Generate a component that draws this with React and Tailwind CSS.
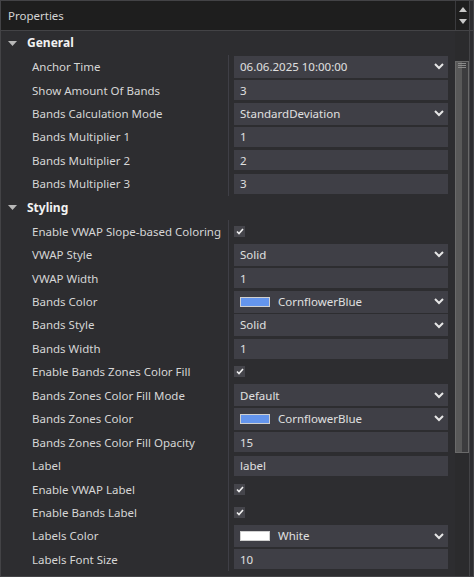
import React from "react";

const FONT = { fontFamily: '"Noto Sans", "Open Sans", sans-serif' };

function Chevron() {
  return (
    <svg width="10" height="7" viewBox="0 0 10 7" className="shrink-0">
      <polyline points="1,1 5,5 9,1" fill="none" stroke="#e6e6e6" strokeWidth="2" />
    </svg>
  );
}

function Check() {
  return (
    <div className="w-[11px] h-[11px] bg-[#45454b] flex items-center justify-center">
      <svg width="8" height="7" viewBox="0 0 8 7">
        <polyline points="1,3.5 3,5.5 7,1" fill="none" stroke="#f0f0f0" strokeWidth="1.6" />
      </svg>
    </div>
  );
}

function Dropdown({ text, swatch }) {
  return (
    <div className="w-full h-[22px] bg-[#3f3f46] flex items-center pl-[6px] pr-[4px]">
      {swatch && (
        <div className="w-[30px] h-[10px] border border-[#d0d0d0] mr-[8px] shrink-0" style={{ background: swatch }} />
      )}
      <span className="flex-1 text-[#e0e0e0]">{text}</span>
      <Chevron />
    </div>
  );
}

function TextBox({ text }) {
  return (
    <div className="w-full h-[20px] bg-[#3f3f46] flex items-center pl-[6px] text-[#e0e0e0]">{text}</div>
  );
}

function Row({ label, children }) {
  return (
    <div className="flex h-[23.45px]">
      <div className="w-[228px] shrink-0 border-r border-[#3f3f46] pl-[31px] flex items-center text-[#d6d6d6] whitespace-nowrap">
        {label}
      </div>
      <div className="flex-1 pl-[5px] pr-[7px] flex items-center">{children}</div>
    </div>
  );
}

function Section({ title }) {
  return (
    <div className="h-[24px] flex items-center pl-[7px]">
      <svg width="9" height="5" viewBox="0 0 9 5" className="mr-[10px]">
        <polygon points="0,0 9,0 4.5,5" fill="#b8b8b8" />
      </svg>
      <span className="font-bold text-[#f2f2f2] text-[12px]">{title}</span>
    </div>
  );
}

export default function App() {
  return (
    <div style={FONT} className="w-[474px] h-[577px] bg-[#2d2d30] border border-[#434346] flex flex-col overflow-hidden text-[11.5px]">
      <div className="h-[30px] shrink-0 flex bg-[#1e1e1e] border-b border-[#434346]">
        <div className="flex-1 pl-[7px] flex items-center text-[#d4d4d4]">Properties</div>
        <div className="w-[14px] border-l border-[#3a3a3d] flex flex-col items-center justify-between py-[6px]">
          <svg width="8" height="5" viewBox="0 0 8 5"><polygon points="0,5 8,5 4,0" fill="#c8c8c8" /></svg>
          <svg width="8" height="5" viewBox="0 0 8 5"><polygon points="0,0 8,0 4,5" fill="#c8c8c8" /></svg>
        </div>
        <div className="w-[4px] border-l border-[#434346] bg-[#2d2d30]" />
      </div>
      <div className="flex-1 flex min-h-0">
        <div className="w-[454px] shrink-0 flex flex-col">
          <Section title="General" />
          <Row label="Anchor Time"><Dropdown text="06.06.2025 10:00:00" /></Row>
          <Row label="Show Amount Of Bands"><TextBox text="3" /></Row>
          <Row label="Bands Calculation Mode"><Dropdown text="StandardDeviation" /></Row>
          <Row label="Bands Multiplier 1"><TextBox text="1" /></Row>
          <Row label="Bands Multiplier 2"><TextBox text="2" /></Row>
          <Row label="Bands Multiplier 3"><TextBox text="3" /></Row>
          <Section title="Styling" />
          <Row label="Enable VWAP Slope-based Coloring"><Check /></Row>
          <Row label="VWAP Style"><Dropdown text="Solid" /></Row>
          <Row label="VWAP Width"><TextBox text="1" /></Row>
          <Row label="Bands Color"><Dropdown text="CornflowerBlue" swatch="#6495ed" /></Row>
          <Row label="Bands Style"><Dropdown text="Solid" /></Row>
          <Row label="Bands Width"><TextBox text="1" /></Row>
          <Row label="Enable Bands Zones Color Fill"><Check /></Row>
          <Row label="Bands Zones Color Fill Mode"><Dropdown text="Default" /></Row>
          <Row label="Bands Zones Color"><Dropdown text="CornflowerBlue" swatch="#6495ed" /></Row>
          <Row label="Bands Zones Color Fill Opacity"><TextBox text="15" /></Row>
          <Row label="Label"><TextBox text="label" /></Row>
          <Row label="Enable VWAP Label"><Check /></Row>
          <Row label="Enable Bands Label"><Check /></Row>
          <Row label="Labels Color"><Dropdown text="White" swatch="#ffffff" /></Row>
          <Row label="Labels Font Size"><TextBox text="10" /></Row>
        </div>
        <div className="w-[14px] shrink-0 bg-[#2b2b2d] flex flex-col pt-[30px]">
          <div className="h-[392px] border border-[#6a6a6a] flex relative">
            <div className="w-[6px] bg-[#595959]" />
            <div className="flex-1 bg-[#3c3c3e]" />
            <div className="absolute left-[2px] right-[2px] top-[1px] flex flex-col gap-[1px]">
              <div className="h-px bg-[#8a8a8a]" />
              <div className="h-px bg-[#8a8a8a]" />
              <div className="h-px bg-[#8a8a8a]" />
            </div>
          </div>
        </div>
        <div className="w-[4px] border-l border-[#434346]" />
      </div>
    </div>
  );
}
